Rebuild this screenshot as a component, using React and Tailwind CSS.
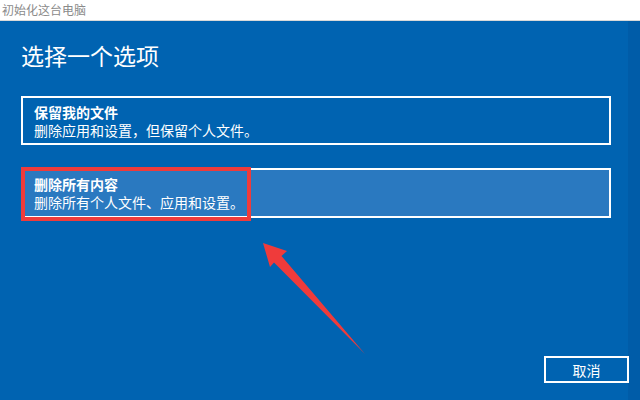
import React from "react";

export default function App() {
  const font = { fontFamily: '"Noto Sans CJK SC", "Noto Sans", sans-serif' };
  return (
    <div className="relative w-[640px] h-[400px] flex flex-col overflow-hidden" style={font}>
      <div className="h-[21px] bg-white border-b border-[#d9d9d9] flex items-center pl-[2px]">
        <span className="text-[12px] leading-none text-[#8a8a8a]">初始化这台电脑</span>
      </div>
      <div className="flex-1 flex flex-col bg-[linear-gradient(to_right,#0063b1_628px,#005ca8_628px)] pl-[21px] pr-[11px] pt-[20px] pb-[17px]">
        <h1 className="text-[23px] leading-[28px] text-white font-normal">选择一个选项</h1>
        <div className="mt-[27px] w-[590px] h-[49px] border-2 border-white pl-[11px] pt-[5px] text-white">
          <div className="text-[14px] leading-[18px] font-bold">保留我的文件</div>
          <div className="text-[14px] leading-[18px]">删除应用和设置，但保留个人文件。</div>
        </div>
        <div className="mt-[23px] w-[590px] h-[50px] border-2 border-white bg-[#2a79c0] pl-[11px] pt-[5px] text-white">
          <div className="text-[14px] leading-[18px] font-bold">删除所有内容</div>
          <div className="text-[14px] leading-[18px]">删除所有个人文件、应用和设置。</div>
        </div>
        <div className="mt-auto flex justify-end">
          <button className="w-[85px] h-[27px] border-2 border-white text-white text-[14px] leading-none">取消</button>
        </div>
      </div>
      <div className="absolute left-[21px] top-[167px] w-[230px] h-[54px] border-[4px] border-[#ef3b3b] pointer-events-none" />
      <svg className="absolute left-0 top-0 pointer-events-none" width="640" height="400" viewBox="0 0 640 400">
        <polygon
          points="263,243 287,251 281.5,256 365,354 274,262.5 270,267"
          fill="#ef3b3b"
        />
      </svg>
    </div>
  );
}
